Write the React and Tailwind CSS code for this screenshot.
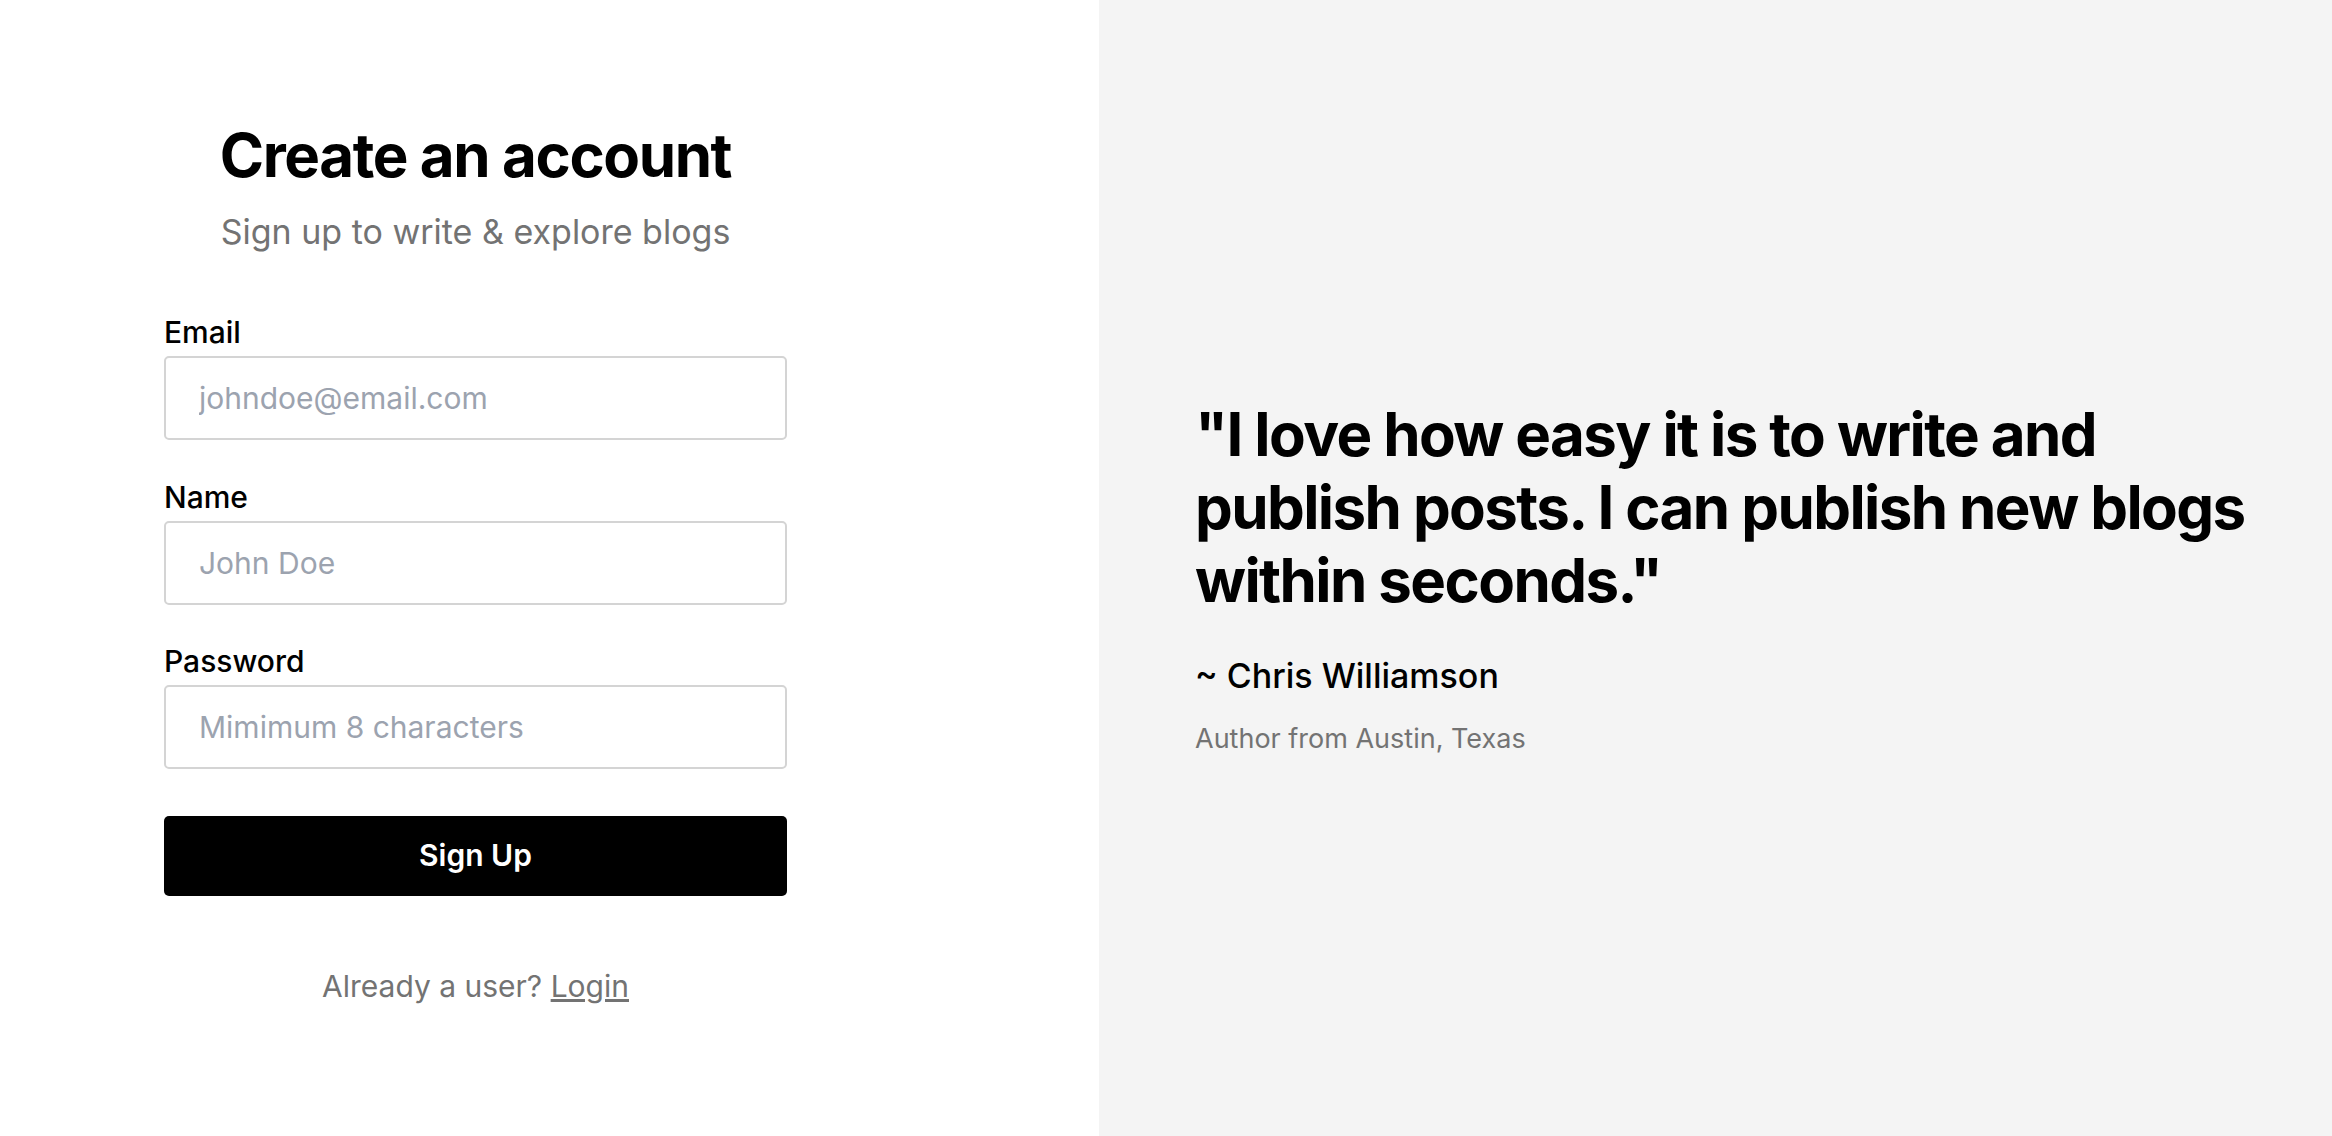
export default function App() {
  const font = { fontFamily: 'Inter, "Noto Sans", sans-serif' };
  const inputCls =
    "mt-[9px] h-[84px] w-full rounded-[5px] border-2 border-[#d4d4d4] bg-white pl-[33px] text-[30px] outline-none placeholder:text-[#9ca3af]";
  return (
    <div className="flex h-[1136px] w-[2332px]" style={font}>
      <div className="flex h-full w-[1099px] items-center bg-white pb-[11px] pl-[164px]">
        <div className="flex w-[623px] flex-col">
          <h1 className="text-center text-[60px] font-bold leading-none tracking-[-1.4px] text-black">
            Create an account
          </h1>
          <p className="mt-[30px] text-center text-[34px] leading-none text-[#737373]">
            Sign up to write &amp; explore blogs
          </p>
          <label className="mt-[68px] text-[30px] font-medium leading-none text-black">Email</label>
          <input className={inputCls} placeholder="johndoe@email.com" />
          <label className="mt-[42px] text-[30px] font-medium leading-none text-black">Name</label>
          <input className={inputCls} placeholder="John Doe" />
          <label className="mt-[41px] text-[30px] font-medium leading-none text-black">Password</label>
          <input type="password" className={inputCls} placeholder="Mimimum 8 characters" />
          <button className="mt-[47px] h-[80px] w-full rounded-[5px] bg-black text-[30px] font-semibold text-white">
            Sign Up
          </button>
          <p className="mt-[75px] text-center text-[30px] leading-none text-[#737373]">
            Already a user? <a className="underline">Login</a>
          </p>
        </div>
      </div>
      <div className="flex h-full flex-1 items-center bg-[#f4f4f4] pl-[96px] pr-[40px] pt-[14px]">
        <div className="flex flex-col">
          <p className="text-[60px] font-bold leading-[73px] tracking-[-1.6px] text-black">
            "I love how easy it is to write and publish posts. I can publish new blogs within seconds."
          </p>
          <p className="mt-[42px] text-[34px] font-medium leading-none text-black">~ Chris Williamson</p>
          <p className="mt-[32px] text-[27px] leading-none text-[#737373]">Author from Austin, Texas</p>
        </div>
      </div>
    </div>
  );
}
